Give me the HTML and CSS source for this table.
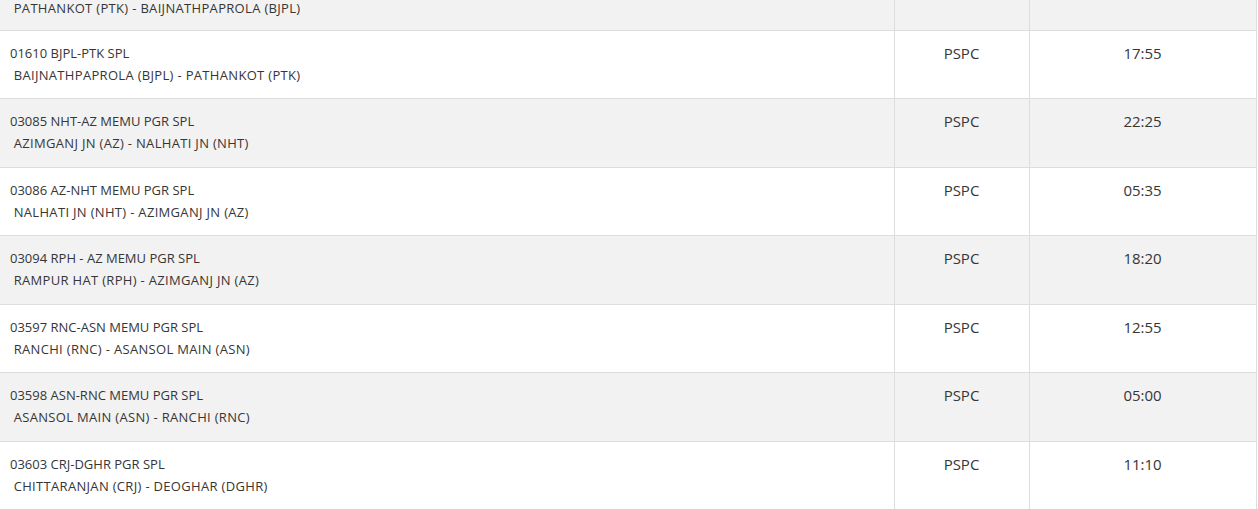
FILE: index.html
```html
<!DOCTYPE html>
<html>
<head>
<meta charset="utf-8">
<link rel="stylesheet" href="styles.css">
</head>
<body>
<table class="trains">
  <colgroup>
    <col class="c-train">
    <col class="c-type">
    <col class="c-time">
  </colgroup>
  <tbody>
    <tr class="partial"><td class="name"><span class="route">&nbsp;PATHANKOT (PTK) - BAIJNATHPAPROLA (BJPL)</span></td><td class="type"></td><td class="time"></td></tr>
    <tr><td class="name">01610 BJPL-PTK SPL<br><span class="route">&nbsp;BAIJNATHPAPROLA (BJPL) - PATHANKOT (PTK)</span></td><td class="type">PSPC</td><td class="time">17:55</td></tr>
    <tr><td class="name">03085 NHT-AZ MEMU PGR SPL<br><span class="route">&nbsp;AZIMGANJ JN (AZ) - NALHATI JN (NHT)</span></td><td class="type">PSPC</td><td class="time">22:25</td></tr>
    <tr><td class="name">03086 AZ-NHT MEMU PGR SPL<br><span class="route">&nbsp;NALHATI JN (NHT) - AZIMGANJ JN (AZ)</span></td><td class="type">PSPC</td><td class="time">05:35</td></tr>
    <tr><td class="name">03094 RPH - AZ MEMU PGR SPL<br><span class="route">&nbsp;RAMPUR HAT (RPH) - AZIMGANJ JN (AZ)</span></td><td class="type">PSPC</td><td class="time">18:20</td></tr>
    <tr><td class="name">03597 RNC-ASN MEMU PGR SPL<br><span class="route">&nbsp;RANCHI (RNC) - ASANSOL MAIN (ASN)</span></td><td class="type">PSPC</td><td class="time">12:55</td></tr>
    <tr><td class="name">03598 ASN-RNC MEMU PGR SPL<br><span class="route">&nbsp;ASANSOL MAIN (ASN) - RANCHI (RNC)</span></td><td class="type">PSPC</td><td class="time">05:00</td></tr>
    <tr><td class="name">03603 CRJ-DGHR PGR SPL<br><span class="route">&nbsp;CHITTARANJAN (CRJ) - DEOGHAR (DGHR)</span></td><td class="type">PSPC</td><td class="time">11:10</td></tr>
  </tbody>
</table>
</body>
</html>
```
FILE: styles.css
```css
html, body {
  margin: 0;
  padding: 0;
  background: #ffffff;
  overflow: hidden;
}
body {
  font-family: "Open Sans", "Liberation Sans", sans-serif;
  color: #363636;
}
.trains {
  width: 1256px;
  border-collapse: collapse;
  table-layout: fixed;
  margin-top: -3.5px;
}
.c-train { width: 894px; }
.c-type { width: 135px; }
.c-time { width: 227px; }
.trains td {
  border-top: 1px solid #dddddd;
  vertical-align: top;
  padding: 12px 10px;
  line-height: 21.75px;
  height: 43.5px;
}
.trains td + td {
  border-left: 1px solid #dddddd;
}
.trains td:last-child {
  border-right: 1px solid #dddddd;
}
.trains tr:nth-child(odd) td {
  background: #f2f2f2;
}
.trains tr.partial td {
  padding: 0 10px 10.5px;
  height: 21.75px;
}
.name {
  font-size: 13px;
  white-space: nowrap;
}
.route {
  letter-spacing: 0.32px;
}
.type, .time {
  text-align: center;
  font-size: 15px;
}
```
